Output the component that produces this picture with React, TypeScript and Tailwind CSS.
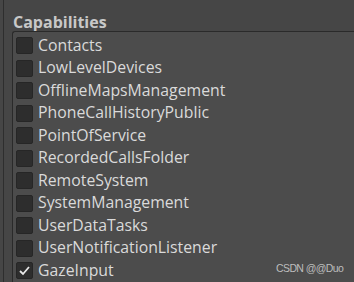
import React from "react";

const items = [
  "Contacts",
  "LowLevelDevices",
  "OfflineMapsManagement",
  "PhoneCallHistoryPublic",
  "PointOfService",
  "RecordedCallsFolder",
  "RemoteSystem",
  "SystemManagement",
  "UserDataTasks",
  "UserNotificationListener",
  "GazeInput",
];

export default function App() {
  return (
    <div
      className="relative w-[354px] h-[282px] overflow-hidden bg-[#464646] flex"
      style={{ fontFamily: '"Open Sans", "Noto Sans", sans-serif' }}
    >
      <div className="ml-[3px] w-[1px] h-full bg-[#2e2e2e]" />
      <div className="flex-1 flex flex-col">
        <div className="h-[35px] pl-[9px] pt-[14px] text-[16px] font-bold text-[#c8c8c8] leading-none">
          Capabilities
        </div>
        <div className="ml-[8px] flex-1 border-t border-l border-[#2a2a2a] rounded-tl-[3px] bg-[#4c4c4c] pt-[2.5px]">
          {items.map((name, i) => (
            <div key={name} className="h-[22.5px] flex items-center pl-[3px]">
              <div className="w-[17px] h-[17px] rounded-[2px] bg-[#2d2d2d] border border-[#262626] flex items-center justify-center">
                {i === items.length - 1 && (
                  <svg width="13" height="13" viewBox="0 0 13 13">
                    <path d="M2 7 L5 10 L11 3" fill="none" stroke="#e8e8e8" strokeWidth="1.8" />
                  </svg>
                )}
              </div>
              <span className="ml-[5px] text-[15.8px] leading-none text-[#dadada] whitespace-nowrap">
                {name}
              </span>
            </div>
          ))}
        </div>
      </div>
      <div
        className="absolute left-[276px] top-[263px] text-[10.5px] tracking-[-0.6px] leading-none text-[#bdbdbd]"
        style={{ fontFamily: '"Liberation Sans", sans-serif' }}
      >
        CSDN @@Duo
      </div>
    </div>
  );
}
